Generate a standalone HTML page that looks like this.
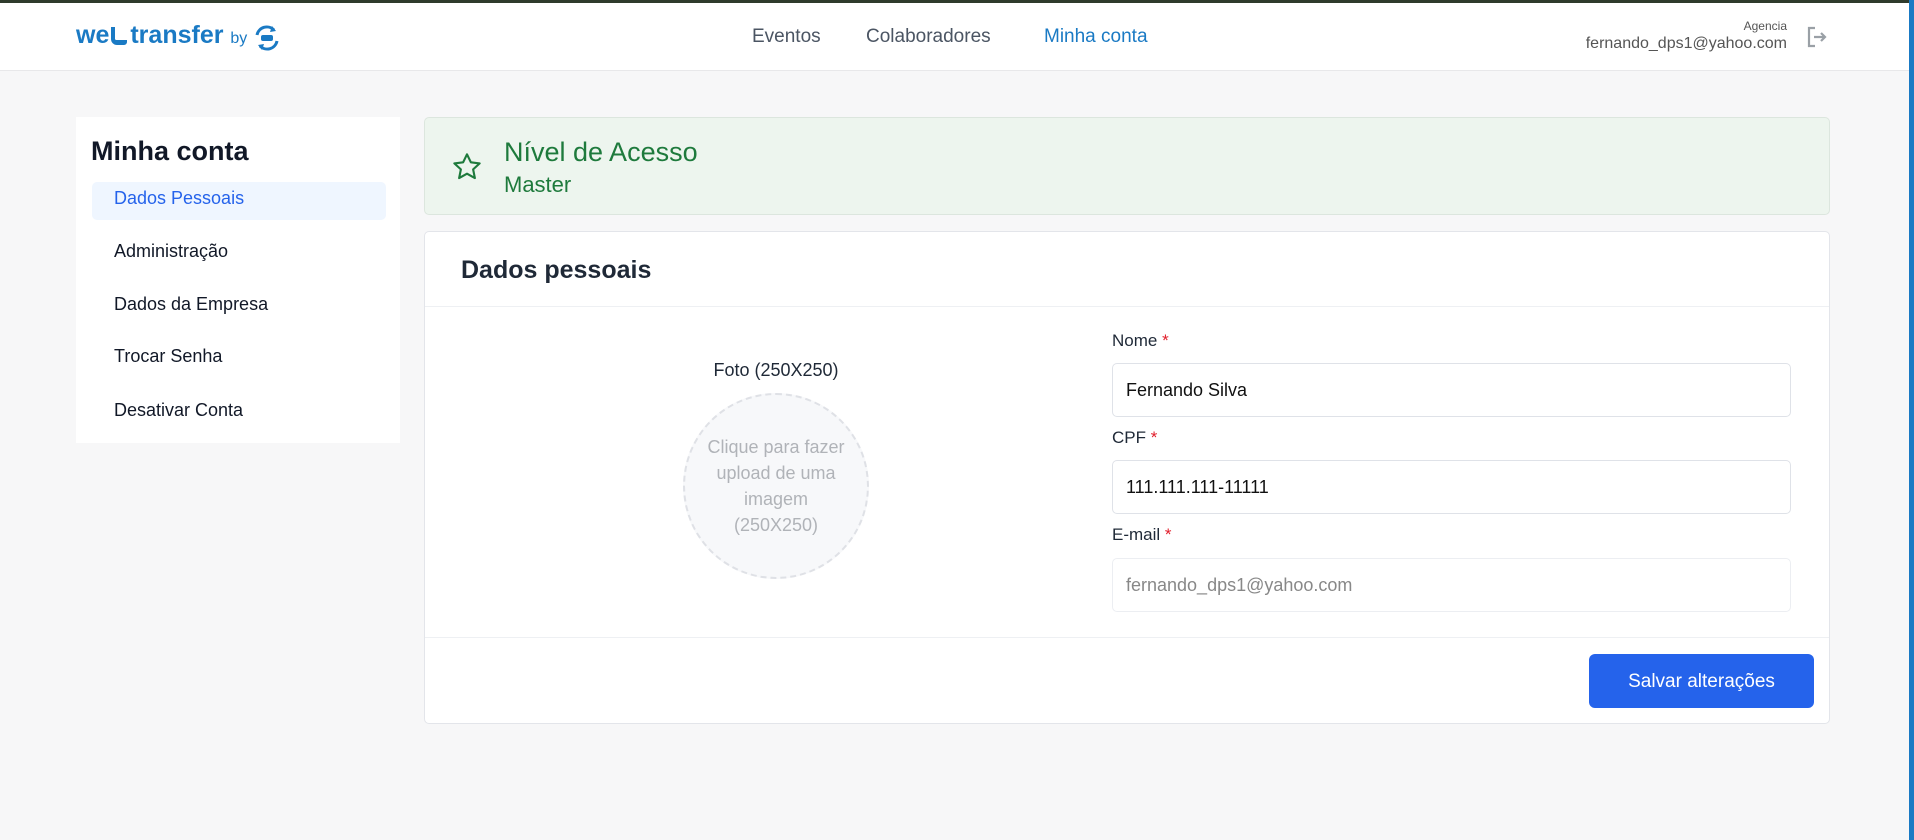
<!DOCTYPE html>
<html><head><meta charset="utf-8"><style>
*{box-sizing:border-box;margin:0;padding:0}
body{width:1914px;height:840px;overflow:hidden;background:#f7f7f8;font-family:"Liberation Sans",sans-serif;position:relative;color:#1f2937}
.abs{position:absolute}
.hdr{left:0;top:0;width:1909px;height:71px;background:#fff;border-bottom:1px solid #e8e8ea;border-top:3px solid #2f3b2c}
.rbar{left:1909px;top:0;width:5px;height:840px;background:#1a7ac4}
.nav{top:26px;font-size:19px;color:#4b5563}
.side{left:76px;top:117px;width:324px;height:326px;background:#fff}
.item{left:114px;font-size:18px;color:#111827}
.card{left:424px;width:1406px;background:#fff;border:1px solid #e3e5ea;border-radius:5px}
.lbl{left:1112px;font-size:17px;color:#1f2937}
.lbl b{color:#e11d2a;font-weight:normal}
.inp{left:1112px;width:679px;height:54px;border:1px solid #dfe2e8;border-radius:5px;background:#fff;font-size:18px;padding-left:13px;line-height:52px;color:#111}
</style></head><body>
<div class="abs hdr"></div>
<div class="abs rbar"></div>
<div class="abs" style="left:76px;top:21px;font-size:25px;font-weight:bold;color:#1a7ac4">we<span style="display:inline-block;width:16px;height:18px;border-bottom:5px solid #1a7ac4;border-left:4px solid #1a7ac4;border-radius:0 0 3px 6px;margin:0 3px -2px 2px"></span>transfer <span style="font-size:16px;font-weight:normal">by</span></div>
<svg class="abs" style="left:252px;top:23px" width="30" height="30" viewBox="0 0 30 30"><path d="M5 12a10 10 0 0 1 17-5" fill="none" stroke="#1a7ac4" stroke-width="3"/><path d="M25 18a10 10 0 0 1-17 5" fill="none" stroke="#1a7ac4" stroke-width="3"/><path d="M20 3l4 5-6 1z M10 27l-4-5 6-1z" fill="#1a7ac4"/><rect x="9" y="12" width="12" height="6" rx="2" fill="#1a7ac4"/></svg>
<div class="abs nav" style="left:752px">Eventos</div>
<div class="abs nav" style="left:866px">Colaboradores</div>
<div class="abs nav" style="left:1044px;color:#1a7ac4">Minha conta</div>
<div class="abs" style="right:127px;top:19px;font-size:12px;color:#555">Agencia</div>
<div class="abs" style="right:127px;top:35px;font-size:16px;color:#555">fernando_dps1@yahoo.com</div>
<svg class="abs" style="left:1806px;top:26px" width="22" height="22" viewBox="0 0 22 22"><path d="M9 2H3v18h6" fill="none" stroke="#9aa0a6" stroke-width="2.2"/><path d="M8 11h11M15 7l4 4-4 4" fill="none" stroke="#9aa0a6" stroke-width="2.2"/></svg>

<div class="abs side"></div>
<div class="abs" style="left:91px;top:136px;font-size:27px;font-weight:bold;color:#111827">Minha conta</div>
<div class="abs" style="left:92px;top:182px;width:294px;height:38px;background:#eff6ff;border-radius:5px"></div>
<div class="abs item" style="top:188px;color:#2563eb">Dados Pessoais</div>
<div class="abs item" style="top:241px">Administração</div>
<div class="abs item" style="top:294px">Dados da Empresa</div>
<div class="abs item" style="top:346px">Trocar Senha</div>
<div class="abs item" style="top:400px">Desativar Conta</div>

<div class="abs card" style="top:117px;height:98px;background:#edf5ee;border-color:#dce6de"></div>
<svg class="abs" style="left:451px;top:151px" width="32" height="32" viewBox="0 0 24 24"><path d="M12 2.5l2.9 6 6.6.8-4.9 4.5 1.3 6.5L12 17l-5.9 3.3 1.3-6.5L2.5 9.3l6.6-.8z" fill="none" stroke="#1e7a3c" stroke-width="1.6" stroke-linejoin="round"/></svg>
<div class="abs" style="left:504px;top:137px;font-size:27px;color:#1e7a3c">Nível de Acesso</div>
<div class="abs" style="left:504px;top:172px;font-size:22px;color:#1e7a3c">Master</div>

<div class="abs card" style="top:231px;height:493px"></div>
<div class="abs" style="left:461px;top:256px;font-size:25px;font-weight:bold;color:#1f2937">Dados pessoais</div>
<div class="abs" style="left:425px;top:306px;width:1404px;height:1px;background:#eef0f3"></div>
<div class="abs" style="left:425px;top:637px;width:1404px;height:1px;background:#eef0f3"></div>
<div class="abs" style="left:676px;top:360px;width:200px;text-align:center;font-size:18px;color:#1f2937">Foto (250X250)</div>
<div class="abs" style="left:683px;top:393px;width:186px;height:186px;border-radius:50%;border:2px dashed #dfe1e6;background:#f7f8fa;display:flex;align-items:center;justify-content:center;text-align:center;font-size:18px;line-height:26px;color:#b0b3b8;padding:0 16px">Clique para fazer upload de uma imagem<br>(250X250)</div>

<div class="abs lbl" style="top:331px">Nome <b>*</b></div>
<div class="abs inp" style="top:363px">Fernando Silva</div>
<div class="abs lbl" style="top:428px">CPF <b>*</b></div>
<div class="abs inp" style="top:460px">111.111.111-11111</div>
<div class="abs lbl" style="top:525px">E-mail <b>*</b></div>
<div class="abs inp" style="top:558px;color:#888;border-color:#eceef2">fernando_dps1@yahoo.com</div>

<div class="abs" style="left:1589px;top:654px;width:225px;height:54px;background:#2563eb;border-radius:6px;color:#fff;font-size:19px;text-align:center;line-height:56px">Salvar alterações</div>
</body></html>
